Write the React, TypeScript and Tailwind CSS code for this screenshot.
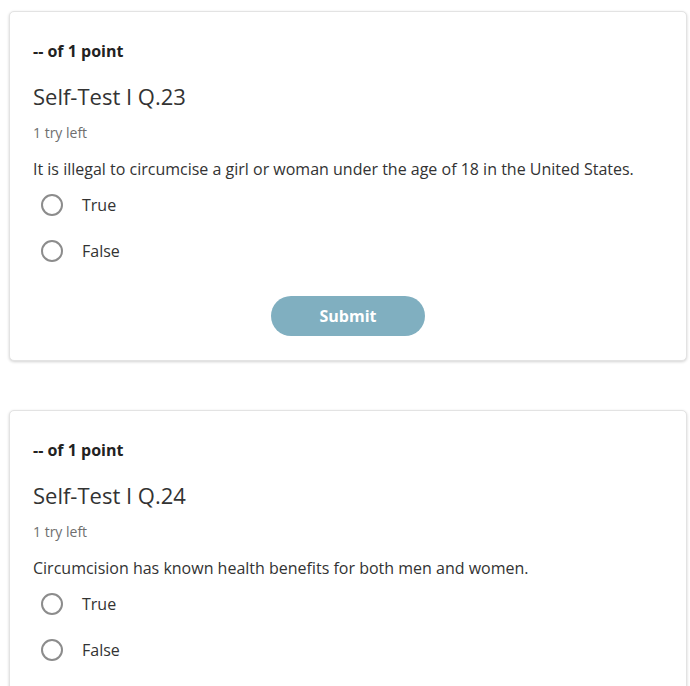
const questions = [
  {
    id: 23,
    text: 'It is illegal to circumcise a girl or woman under the age of 18 in the United States.',
    submit: true,
  },
  {
    id: 24,
    text: 'Circumcision has known health benefits for both men and women.',
    submit: false,
  },
]

function Radio({ label }: { label: string }) {
  return (
    <label className="flex items-center h-[46px] cursor-pointer">
      <span className="ml-[8px] w-[22px] h-[22px] rounded-full border-2 border-[#8c8c8c] bg-white flex-shrink-0" />
      <span className="ml-[19px] text-[16px] leading-6 text-[#333333]">{label}</span>
    </label>
  )
}

function QuestionCard({ q }: { q: (typeof questions)[number] }) {
  return (
    <div className="ml-[9px] w-[678px] bg-white border border-[#e3e3e3] rounded-[5px] shadow-[0_1px_3px_rgba(0,0,0,0.18)] pt-[27px] pb-[24px] pl-[23px] pr-[23px]">
      <div className="text-[16px] leading-6 font-bold text-[#222222]">-- of 1 point</div>
      <h2 className="mt-[18px] text-[22px] leading-[30px] text-[#333333]">Self-Test I Q.{q.id}</h2>
      <div className="mt-[12px] text-[14px] leading-5 text-[#6f6f6f]">1 try left</div>
      <p className="mt-[14px] text-[16px] leading-6 text-[#333333]">{q.text}</p>
      <div className="mt-[1px] flex flex-col">
        <Radio label="True" />
        <Radio label="False" />
      </div>
      {q.submit && (
        <div className="mt-[22px] flex justify-center">
          <button className="w-[154px] h-[40px] rounded-full bg-[#80afc0] text-white text-[16px] font-bold">
            Submit
          </button>
        </div>
      )}
    </div>
  )
}

export default function App() {
  return (
    <div
      className="w-[690px] h-[686px] overflow-hidden bg-white pt-[11px]"
      style={{ fontFamily: '"Open Sans", "Noto Sans", sans-serif' }}
    >
      <div className="flex flex-col gap-[49px]">
        {questions.map(q => (
          <QuestionCard key={q.id} q={q} />
        ))}
      </div>
    </div>
  )
}
